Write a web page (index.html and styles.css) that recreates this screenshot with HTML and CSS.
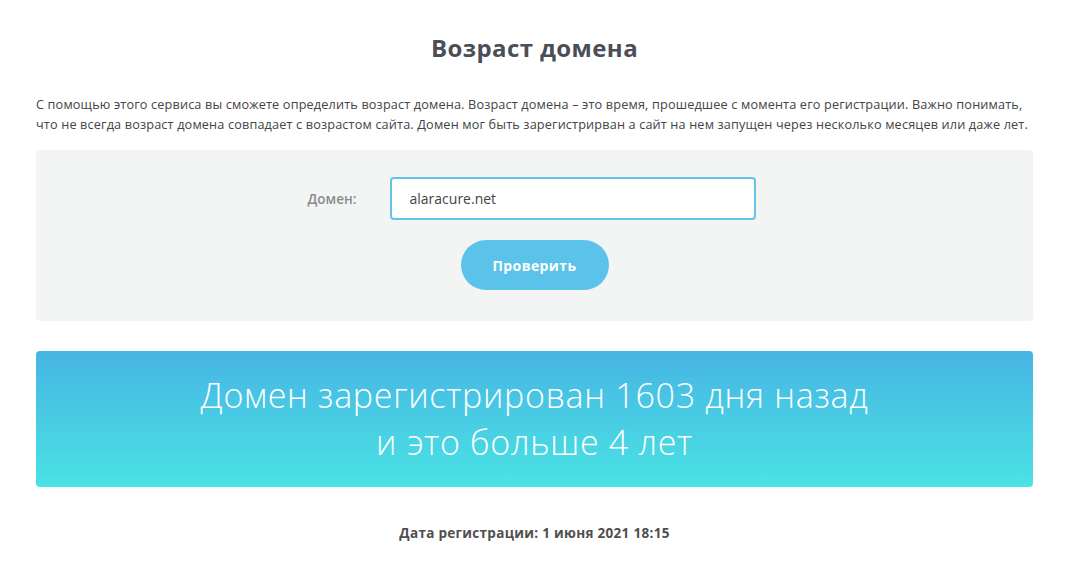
FILE: index.html
```html
<!DOCTYPE html>
<html lang="ru">
<head>
    <meta charset="UTF-8">
    <title>Возраст домена</title>
    <link rel="stylesheet" href="styles.css">
</head>
<body>
<div class="page">
    <h1 class="title">Возраст домена</h1>
    <p class="intro">С помощью этого сервиса вы сможете определить возраст домена. Возраст домена – это время, прошедшее с момента его регистрации. Важно понимать, что не всегда возраст домена совпадает с возрастом сайта. Домен мог быть зарегистрирван а сайт на нем запущен через несколько месяцев или даже лет.</p>

    <form class="check-form">
        <div class="form-row">
            <label class="form-label" for="domain">Домен:</label>
            <input class="form-input" id="domain" type="text" value="alaracure.net">
        </div>
        <button class="btn" type="button">Проверить</button>
    </form>

    <div class="result">
        Домен зарегистрирован 1603 дня назад<br>
        и это больше 4 лет
    </div>

    <p class="reg-date">Дата регистрации: 1 июня 2021 18:15</p>
</div>
</body>
</html>
```

FILE: styles.css
```css
body {
    margin: 0;
    font-family: "Open Sans", "Noto Sans", sans-serif;
    color: #444;
    background: #fff;
}
.page {
    margin: 0 33px 0 36px;
}
.title {
    margin: 0;
    padding-top: 33px;
    text-align: center;
    font-size: 24px;
    font-weight: 700;
    letter-spacing: 0.4px;
    color: #4a4f57;
    line-height: 30px;
}
.intro {
    margin: 31px 0 0;
    font-size: 12.7px;
    letter-spacing: 0.15px;
    line-height: 20px;
    color: #444;
}
.check-form {
    margin-top: 16px;
    background: #f3f5f5;
    border-radius: 4px;
    padding: 27px 0 31px;
    display: flex;
    flex-direction: column;
    align-items: center;
    gap: 20px;
}
.form-row {
    display: flex;
    align-items: center;
    margin-right: 6px;
}
.form-label {
    width: 82px;
    font-size: 13.5px;
    font-weight: 600;
    color: #8a8d8f;
}
.form-input {
    box-sizing: border-box;
    width: 366px;
    height: 43px;
    border: 2px solid #62c5e8;
    border-radius: 4px;
    padding: 0 18px;
    font-family: inherit;
    font-size: 14px;
    font-weight: 500;
    color: #444;
    background: #fff;
    outline: none;
}
.btn {
    width: 148px;
    height: 50px;
    border: none;
    border-radius: 25px;
    background: #5bc3ea;
    color: #fff;
    font-family: inherit;
    font-size: 14px;
    font-weight: 700;
    letter-spacing: 0.4px;
    cursor: pointer;
}
.result {
    margin-top: 30px;
    height: 136px;
    box-sizing: border-box;
    padding-top: 21px;
    border-radius: 4px;
    background: linear-gradient(to bottom, #47b5e4, #4ae3e4);
    text-align: center;
    color: #fff;
    font-size: 34px;
    font-weight: 300;
    letter-spacing: 0.7px;
    line-height: 47px;
}
.reg-date {
    margin: 37px 0 0;
    text-align: center;
    font-size: 13.5px;
    font-weight: 700;
    letter-spacing: 0.3px;
    color: #4f4f4f;
}
```
